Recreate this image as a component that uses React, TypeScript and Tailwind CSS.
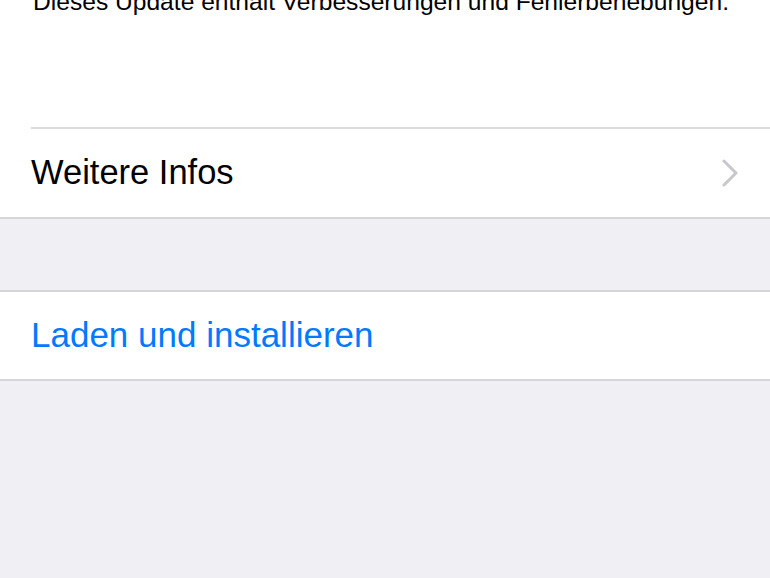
const Chevron = () => (
  <svg width="16" height="28" viewBox="0 0 16 28" fill="none">
    <polyline points="2,2 14,14 2,26" stroke="#c7c7cc" strokeWidth="3" strokeLinecap="round" strokeLinejoin="round" />
  </svg>
);

export default function App() {
  return (
    <div className="min-h-screen bg-[#efeff4] font-['Liberation_Sans',Arial,sans-serif] overflow-hidden">
      {/* update notes + more info */}
      <div className="bg-white border-b-2 border-[#d6d5da]">
        <div className="h-[127px] pl-[33px] flex flex-col">
          <p className="-mt-[11px] text-[24.6px] leading-[25px] text-black whitespace-nowrap">
            Dieses Update enthält Verbesserungen und Fehlerbehebungen.
          </p>
        </div>
        <div className="ml-[31px] border-t-2 border-[#dcdbe0] h-[90px] flex items-center justify-between pr-[32px]">
          <span className="text-[34.5px] text-black">Weitere Infos</span>
          <Chevron />
        </div>
      </div>

      <div className="h-[71px]" />

      {/* install action */}
      <div className="bg-white border-y-2 border-[#d6d5da] h-[91px] flex items-center pl-[31px]">
        <span className="text-[35px] text-[#007aff]">Laden und installieren</span>
      </div>
    </div>
  );
}
